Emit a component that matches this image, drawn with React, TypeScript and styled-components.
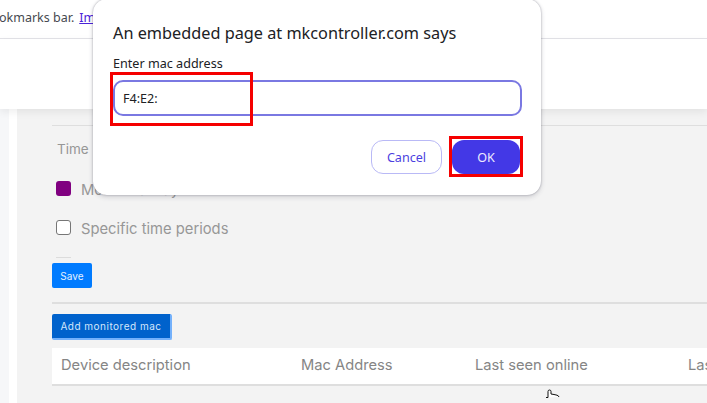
import React from "react";
import styled, { createGlobalStyle } from "styled-components";

const Global = createGlobalStyle`
  html, body { margin: 0; padding: 0; width: 707px; height: 403px; overflow: hidden; background: #f3f3f3; }
  * { box-sizing: border-box; }
`;

const Page = styled.div`
  position: relative;
  width: 707px;
  height: 403px;
  overflow: hidden;
  display: flex;
  flex-direction: column;
  font-family: "Inter", "Open Sans", sans-serif;
`;

const InfoBar = styled.div`
  height: 39px;
  flex: none;
  background: #fff;
  border-bottom: 1px solid #e3e3e8;
  padding-top: 10px;
  font: 12.5px/16px "Noto Sans", sans-serif;
  color: #46494f;
  white-space: nowrap;
  text-indent: -1px;
`;

const InfoLink = styled.a`
  color: #4a22d8;
  text-decoration: underline;
  margin-left: 5px;
`;

const Header = styled.div`
  height: 70px;
  flex: none;
  background: #fff;
  box-shadow: 0 3px 8px rgba(0, 0, 0, 0.07);
  position: relative;
  z-index: 1;
`;

const Body = styled.div`
  flex: 1;
  display: flex;
  min-height: 0;
`;

const Gutter = styled.div`
  width: 9px;
  background: #f6f7f9;
  flex: none;
`;

const Strip = styled.div`
  width: 8px;
  background: #fff;
  flex: none;
`;

const Content = styled.div`
  flex: 1;
  background: #f3f3f3;
  padding: 16px 0 0 35px;
  min-width: 0;
`;

const Rule = styled.div`
  height: 2px;
  background: #dedede;
`;

const TopRule = styled(Rule)`
  height: 1px;
`;

const TimeLabel = styled.div`
  margin: 14px 0 0 5px;
  font-size: 13.5px;
  line-height: 18px;
  color: #969696;
`;

const Option = styled.div<{ $top: number }>`
  display: flex;
  align-items: center;
  gap: 10px;
  margin: ${(p) => p.$top}px 0 0 4px;
  height: 16px;
  font-size: 14.75px;
  color: #979797;
  white-space: nowrap;
`;

const OptionText = styled.span`
  padding-top: 3px;
`;

const Check = styled.span<{ $on?: boolean }>`
  width: 15px;
  height: 15px;
  flex: none;
  border-radius: 3px;
  background: ${(p) => (p.$on ? "#800080" : "#fff")};
  border: ${(p) => (p.$on ? "none" : "1px solid #767676")};
`;

const Tick = styled.div`
  width: 15px;
  height: 1px;
  margin: 22px 0 0 4px;
  background: #dcdcdc;
`;

const SaveButton = styled.button`
  display: block;
  margin-top: 5px;
  width: 40px;
  height: 25px;
  padding: 0;
  border: none;
  border-radius: 2px;
  background: #007bff;
  color: #e4f0ff;
  font: 10px "Inter", sans-serif;
  letter-spacing: 0.1px;
`;

const SectionRule = styled(Rule)`
  margin-top: 14px;
`;

const AddButton = styled.button`
  display: block;
  margin-top: 10px;
  width: 120px;
  height: 26px;
  padding: 0 0 1px;
  border: none;
  border-right: 2px solid #74b1fb;
  border-bottom: 2px solid #74b1fb;
  border-radius: 2px;
  background: #0062cc;
  color: #d5e7fb;
  font: 10px "Inter", sans-serif;
  letter-spacing: 0.5px;
  white-space: nowrap;
`;

const TableHead = styled.div`
  margin-top: 8px;
  height: 38px;
  display: grid;
  grid-template-columns: 240px 174px 213px 100px;
  align-items: center;
  padding-left: 9px;
  padding-bottom: 2px;
  background: #fff;
  border-bottom: 2px solid #dedede;
  font-size: 14.7px;
  color: #858585;
  white-space: nowrap;
  overflow: hidden;
`;

const Dialog = styled.div`
  position: absolute;
  z-index: 2;
  left: 93px;
  top: -1px;
  width: 448px;
  height: 196px;
  padding: 23px 20px 0;
  background: #fff;
  border-radius: 14px;
  box-shadow: 0 0 2px rgba(60, 60, 80, 0.45), 0 2px 5px rgba(60, 60, 80, 0.2);
  font-family: "Noto Sans", sans-serif;
  color: #202124;
`;

const DialogTitle = styled.div`
  font-size: 16.27px;
  line-height: 22px;
`;

const DialogLabel = styled.div`
  margin-top: 11px;
  font-size: 12.6px;
  line-height: 18px;
`;

const PromptInput = styled.div`
  margin-top: 7px;
  width: 409px;
  height: 36px;
  padding-left: 8px;
  border: 2px solid #7a78e2;
  border-radius: 10px;
  display: flex;
  align-items: center;
  font-size: 12.6px;
`;

const DialogActions = styled.div`
  display: flex;
  justify-content: flex-end;
  gap: 10px;
  margin-top: 24px;
  padding-right: 1px;
`;

const CancelButton = styled.button`
  width: 71px;
  height: 34px;
  padding: 0;
  background: #fff;
  border: 1px solid #b9b9f6;
  border-radius: 12px;
  color: #4b3fe0;
  font: 12.6px "Noto Sans", sans-serif;
`;

const OkButton = styled.button`
  width: 68px;
  height: 34px;
  padding: 0;
  background: #4338e6;
  border: none;
  border-radius: 12px;
  color: #eceaff;
  font: 12.6px "Noto Sans", sans-serif;
`;

const Highlight = styled.div<{ $x: number; $y: number; $w: number; $h: number }>`
  position: absolute;
  z-index: 3;
  left: ${(p) => p.$x}px;
  top: ${(p) => p.$y}px;
  width: ${(p) => p.$w}px;
  height: ${(p) => p.$h}px;
  border: 3px solid #f50000;
`;

const Cursor = styled.svg`
  position: absolute;
  z-index: 4;
  left: 545px;
  top: 389px;
`;

export default function App() {
  return (
    <Page>
      <Global />
      <InfoBar>
        okmarks bar.<InfoLink>Import bookmarks now</InfoLink>
      </InfoBar>
      <Header />
      <Body>
        <Gutter />
        <Strip />
        <Content>
          <TopRule />
          <TimeLabel>Time</TimeLabel>
          <Option $top={22}>
            <Check $on />
            <OptionText>Monitor always - 24 hours</OptionText>
          </Option>
          <Option $top={23}>
            <Check />
            <OptionText>Specific time periods</OptionText>
          </Option>
          <Tick />
          <SaveButton>Save</SaveButton>
          <SectionRule />
          <AddButton>Add monitored mac</AddButton>
          <TableHead>
            <span>Device description</span>
            <span>Mac Address</span>
            <span>Last seen online</span>
            <span>Last</span>
          </TableHead>
        </Content>
      </Body>
      <Dialog>
        <DialogTitle>An embedded page at mkcontroller.com says</DialogTitle>
        <DialogLabel>Enter mac address</DialogLabel>
        <PromptInput>F4:E2:</PromptInput>
        <DialogActions>
          <CancelButton>Cancel</CancelButton>
          <OkButton>OK</OkButton>
        </DialogActions>
      </Dialog>
      <Highlight $x={110} $y={72} $w={143} $h={54} />
      <Highlight $x={449} $y={136} $w={74} $h={41} />
      <Cursor width="16" height="10" viewBox="0 0 16 10" fill="#fff" stroke="#111" strokeWidth="1">
        <path d="M1 8.500h2V2.500q0-1.500 1.500-1.500T6 2.500V5l3 .5 3 .7q1.500.4 2 1.800" />
      </Cursor>
    </Page>
  );
}
